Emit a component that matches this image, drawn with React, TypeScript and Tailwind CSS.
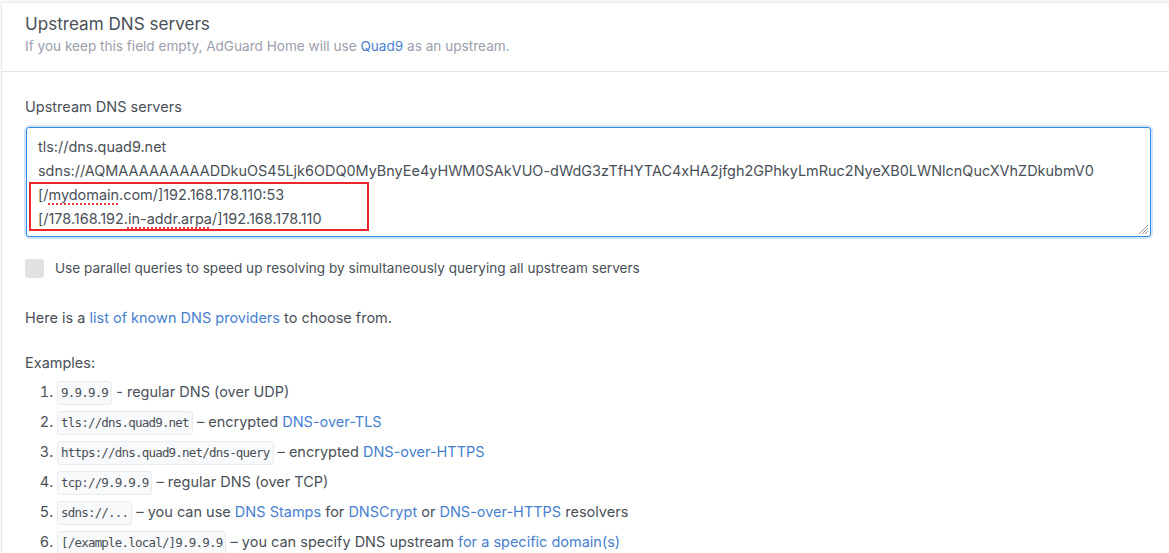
const sans = { fontFamily: "Inter, 'Liberation Sans', sans-serif" };

const Code = ({ children }: { children: React.ReactNode }) => (
  <code className="inline-block rounded-[3px] border border-[#e9ecef] bg-[#f8f9fa] px-[3px] font-['DejaVu_Sans_Mono',monospace] text-[12.5px] leading-[22px] tracking-[-0.8px] text-[#495057]">
    {children}
  </code>
);

const Link = ({ children }: { children: React.ReactNode }) => (
  <a className="text-[#467fcf]">{children}</a>
);

const Spell = ({ children }: { children: React.ReactNode }) => (
  <span className="underline decoration-[#e53935] decoration-dotted decoration-2 underline-offset-[3px]">
    {children}
  </span>
);

const examples: React.ReactNode[] = [
  <>
    <Code>9.9.9.9</Code> - regular DNS (over UDP)
  </>,
  <>
    <Code>tls://dns.quad9.net</Code> – encrypted <Link>DNS-over-TLS</Link>
  </>,
  <>
    <Code>https://dns.quad9.net/dns-query</Code> – encrypted{" "}
    <Link>DNS-over-HTTPS</Link>
  </>,
  <>
    <Code>tcp://9.9.9.9</Code> – regular DNS (over TCP)
  </>,
  <>
    <Code>sdns://...</Code> – you can use <Link>DNS Stamps</Link> for{" "}
    <Link>DNSCrypt</Link> or <Link>DNS-over-HTTPS</Link> resolvers
  </>,
  <>
    <Code>[/example.local/]9.9.9.9</Code> – you can specify DNS upstream{" "}
    <Link>for a specific domain(s)</Link>
  </>,
];

const App = () => {
  return (
    <div
      className="h-[553px] w-[1169px] overflow-hidden bg-[#f5f7fb] pl-px pt-[2px] text-[#495057]"
      style={sans}
    >
      <div className="w-[1200px] rounded-tl-[3px] border border-[#e6e9ef] bg-white">
        <div className="h-[69px] border-b border-[#e3e5e8] pl-[23px] pt-[9px]">
          <h2 className="text-[17.1px] leading-[24px] text-[#495057]">
            Upstream DNS servers
          </h2>
          <p className="mt-[1px] text-[13.6px] leading-[18px] text-[#9aa0ac]">
            If you keep this field empty, AdGuard Home will use{" "}
            <Link>Quad9</Link> as an upstream.
          </p>
        </div>

        <div className="pl-[23px] pt-[25px]">
          <label className="block text-[14.5px] leading-[20px]">
            Upstream DNS servers
          </label>
          <div className="ml-[1px] mt-[10px] w-[1125px] rounded-[4px] shadow-[0_0_0_2px_#d4e3f8]">
            <div className="relative h-[110px] rounded-[3px] border border-[#2e8de6] pl-[11px] pt-[7px] text-[14.45px] leading-[24px] text-[#495057]">
              <div>tls://dns.quad9.net</div>
              <div className="whitespace-nowrap">
                sdns://AQMAAAAAAAAADDkuOS45Ljk6ODQ0MyBnyEe4yHWM0SAkVUO-dWdG3zTfHYTAC4xHA2jfgh2GPhkyLmRuc2NyeXB0LWNlcnQucXVhZDkubmV0
              </div>
              <div>
                [/<Spell>mydomain</Spell>.com/]192.168.178.110:53
              </div>
              <div>
                [/178.168.192.<Spell>in-addr.arpa</Spell>/]192.168.178.110
              </div>
              <div className="absolute left-[2px] top-[54px] h-[49px] w-[340px] border-2 border-[#e8262b]" />
              <svg
                className="absolute bottom-[1px] right-[1px]"
                width="11"
                height="11"
                viewBox="0 0 11 11"
              >
                <path d="M10 1 L1 10 M10 4 L4 10 M10 7 L7 10" stroke="#9a9a9a" strokeWidth="1" />
              </svg>
            </div>
          </div>

          <div className="mt-[21px] flex items-center">
            <span className="h-[19px] w-[19px] rounded-[3px] bg-[#e2e2e2]" />
            <span className="ml-[11px] text-[13.6px] leading-[20px] text-[#495057]">
              Use parallel queries to speed up resolving by simultaneously querying all upstream servers
            </span>
          </div>

          <p className="mt-[30px] text-[14.5px] leading-[20px]">
            Here is a <Link>list of known DNS providers</Link> to choose from.
          </p>

          <p className="mt-[25px] text-[14.5px] leading-[20px]">Examples:</p>
          <ol className="mt-[4px] list-decimal pl-[32px] text-[14.5px] leading-[30px]">
            {examples.map((item, i) => (
              <li key={i}>{item}</li>
            ))}
          </ol>
        </div>
      </div>
    </div>
  );
};

export default App;
